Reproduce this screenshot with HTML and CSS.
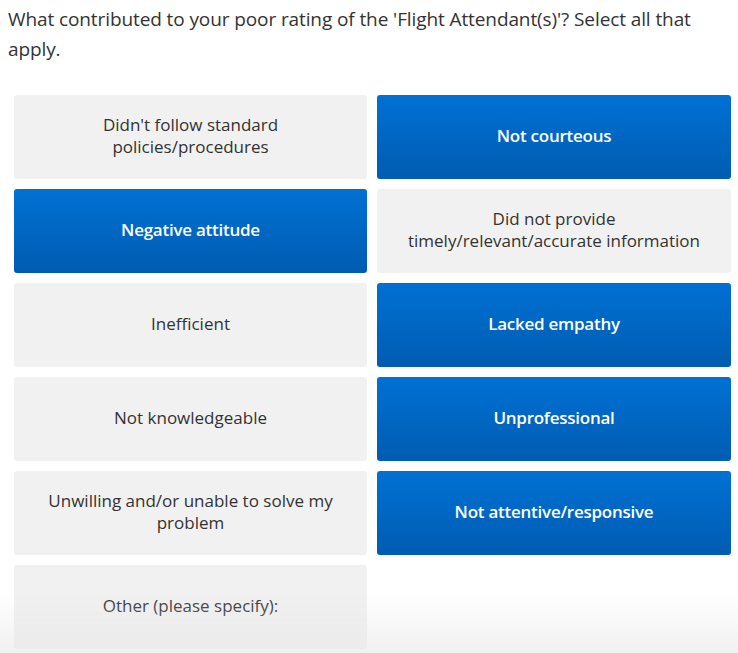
FILE: index.html
```html
<!DOCTYPE html>
<html lang="en">
<head>
	<meta charset="UTF-8">
	<meta name="viewport" content="width=device-width, initial-scale=1.0">
	<title>Flight Attendant Rating</title>
	<link rel="stylesheet" href="styles.css">
</head>
<body>
	<section class="survey">
		<p class="question">What contributed to your poor rating of the 'Flight Attendant(s)'? Select all that apply.</p>

		<div class="choices">
			<button class="choice">Didn't follow standard<br>policies/procedures</button>
			<button class="choice selected">Not courteous</button>
			<button class="choice selected">Negative attitude</button>
			<button class="choice">Did not provide<br>timely/relevant/accurate information</button>
			<button class="choice">Inefficient</button>
			<button class="choice selected">Lacked empathy</button>
			<button class="choice">Not knowledgeable</button>
			<button class="choice selected">Unprofessional</button>
			<button class="choice">Unwilling and/or unable to solve my<br>problem</button>
			<button class="choice selected">Not attentive/responsive</button>
			<button class="choice">Other (please specify):</button>
		</div>
	</section>

	<div class="bottom-fade"></div>
</body>
</html>
```

FILE: styles.css
```css
*,
*::before,
*::after {
	margin: 0;
	padding: 0;
	box-sizing: border-box;
}

:root {
	--text-dark: #333;
	--choice-grey: #f1f1f1;
	--blue-top: #0071d4;
	--blue-bottom: #005cb1;
}

body {
	background: #fff;
	color: var(--text-dark);
	font-family: "Open Sans", sans-serif;
	overflow: hidden;
}

.survey {
	padding: 4px 7px 0 8px;
}

.question {
	font-size: 19px;
	line-height: 30px;
	letter-spacing: -0.1px;
}

/* answer grid */
.choices {
	display: grid;
	grid-template-columns: 353px 354px;
	grid-auto-rows: 84px;
	gap: 10px;
	margin: 31px 0 0 6px;
}

.choice {
	border: none;
	border-radius: 3px;
	background: var(--choice-grey);
	color: var(--text-dark);
	font-family: "Open Sans", sans-serif;
	font-size: 17px;
	line-height: 22px;
	letter-spacing: 0;
	text-align: center;
	padding: 0 10px 2px;
}

.choice.selected {
	background: linear-gradient(to bottom, var(--blue-top), var(--blue-bottom));
	color: #fff;
	font-weight: 600;
	letter-spacing: -0.25px;
}

.bottom-fade {
	position: fixed;
	left: 0;
	right: 0;
	bottom: 0;
	height: 60px;
	pointer-events: none;
	background: linear-gradient(to bottom, rgba(230, 230, 230, 0), rgba(230, 230, 230, 0.55));
}
```
